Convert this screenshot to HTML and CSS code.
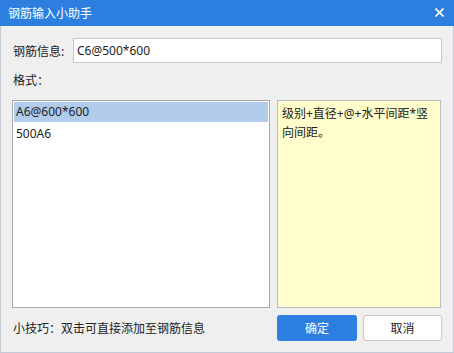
FILE: index.html
```html
<!DOCTYPE html>
<html lang="zh-CN">
<head>
    <meta charset="UTF-8">
    <title>钢筋输入小助手</title>
    <link rel="stylesheet" href="styles.css">
</head>
<body>
    <div class="dialog">
        <div class="title-bar">
            <span class="title">钢筋输入小助手</span>
            <svg class="close" width="9" height="9" viewBox="0 0 9 9">
                <path d="M0.5 0.5 L8.5 8.5 M8.5 0.5 L0.5 8.5" stroke="#fff" stroke-width="1.6"/>
            </svg>
        </div>

        <div class="content">
            <div class="info-row">
                <label for="rebar">钢筋信息:</label>
                <input type="text" id="rebar" value="C6@500*600">
            </div>

            <div class="format-label">格式：</div>

            <div class="panels">
                <ul class="format-list">
                    <li class="selected">A6@600*600</li>
                    <li>500A6</li>
                </ul>
                <div class="format-desc">级别+直径+@+水平间距*竖向间距。</div>
            </div>

            <div class="footer">
                <span class="tip">小技巧：双击可直接添加至钢筋信息</span>
                <div class="buttons">
                    <button class="btn-ok">确定</button>
                    <button class="btn-cancel">取消</button>
                </div>
            </div>
        </div>
    </div>
</body>
</html>
```

FILE: styles.css
```css
/* General */
body {
    margin: 0;
    font-family: 'Noto Sans', 'Noto Sans CJK SC', sans-serif;
    font-size: 12px;
    color: #222;
}

.dialog {
    width: 454px;
    height: 353px;
    box-sizing: border-box;
    background-color: #efefef;
    border: 1px solid #c4cad6;
    border-top: none;
    display: flex;
    flex-direction: column;
}

/* Title bar */
.title-bar {
    height: 26px;
    margin: 0 -1px;
    background-color: #2c7fdf;
    color: #fff;
    display: flex;
    align-items: center;
    justify-content: space-between;
    padding: 0 10px 0 8px;
}

.title {
    font-size: 12px;
}

.close {
    display: block;
    margin-top: -1px;
}

/* Content */
.content {
    flex: 1;
    padding: 12px 11px 11px 11px;
    display: flex;
    flex-direction: column;
}

.info-row {
    display: flex;
    align-items: center;
    height: 25px;
}

.info-row label {
    width: 60px;
    padding-left: 1px;
}

.info-row input {
    flex: 1;
    height: 25px;
    box-sizing: border-box;
    border: 1px solid #c5c6ce;
    padding: 0 3px;
    font-family: inherit;
    font-size: 12px;
    color: #222;
    outline: none;
}

.format-label {
    margin-top: 9px;
    line-height: 18px;
    padding-left: 1px;
}

/* Panels */
.panels {
    margin-top: 10px;
    height: 208px;
    display: grid;
    grid-template-columns: 258px 164px;
    gap: 7px;
}

.format-list {
    list-style: none;
    margin: 0;
    padding: 1px;
    background-color: #fff;
    border: 1px solid #a9a9a9;
}

.format-list li {
    height: 20px;
    line-height: 20px;
    padding-left: 2px;
    margin-bottom: 2px;
}

.format-list li.selected {
    background-color: #b0cbec;
}

.format-desc {
    background-color: #fffdcc;
    border: 1px solid #bdbdbd;
    padding: 3px 4px;
    line-height: 19px;
}

/* Footer */
.footer {
    margin-top: 7px;
    display: flex;
    align-items: center;
    justify-content: space-between;
}

.tip {
    padding-left: 1px;
}

.buttons {
    display: flex;
    gap: 6px;
}

.buttons button {
    width: 80px;
    height: 26px;
    border-radius: 3px;
    font-family: inherit;
    font-size: 12px;
    cursor: pointer;
}

.btn-ok {
    background-color: #2c7fdf;
    color: #fff;
    border: none;
}

.btn-cancel {
    width: 79px !important;
    background-color: #fff;
    color: #222;
    border: 1px solid #c8c8c8;
}
```
